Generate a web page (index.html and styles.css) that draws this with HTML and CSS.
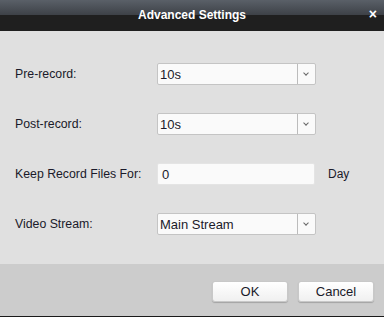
FILE: index.html
```html
<!DOCTYPE html>
<html lang="en">

<head>
    <meta charset="utf-8">
    <title>Advanced Settings</title>
    <link rel="stylesheet" href="styles.css">
</head>

<body>
    <div class="dialog">
        <div class="titlebar">
            <h1>Advanced Settings</h1>
            <span class="close">&#215;</span>
        </div>

        <div class="content">
            <div class="row">
                <label>Pre-record:</label>
                <div class="select"><span>10s</span><i class="arrow"></i></div>
            </div>
            <div class="row">
                <label>Post-record:</label>
                <div class="select"><span>10s</span><i class="arrow"></i></div>
            </div>
            <div class="row">
                <label>Keep Record Files For:</label>
                <div class="input">0</div>
                <span class="unit">Day</span>
            </div>
            <div class="row">
                <label>Video Stream:</label>
                <div class="select"><span>Main Stream</span><i class="arrow"></i></div>
            </div>
        </div>

        <div class="footer">
            <button>OK</button>
            <button>Cancel</button>
        </div>
    </div>
</body>

</html>
```

FILE: styles.css
```css
* {
    margin: 0;
    box-sizing: border-box;
}

body {
    background: #e0e0e0;
    font-family: 'Liberation Sans', Arial, sans-serif;
    font-size: 12px;
    color: #1a1a2a;
}

.dialog {
    width: 384px;
    height: 317px;
    display: flex;
    flex-direction: column;
}

.titlebar {
    height: 31px;
    background: linear-gradient(#5a6068 0px, #3d4147 15px, #1f1f1f 15px, #1f1f1f 100%);
    display: flex;
    align-items: center;
    justify-content: center;
    position: relative;
}

.titlebar h1 {
    font-size: 12px;
    font-weight: bold;
    color: #fff;
    padding-bottom: 1px;
}

.close {
    position: absolute;
    right: 7px;
    top: 7px;
    color: #fff;
    font-weight: bold;
    font-size: 14px;
    line-height: 14px;
}

.content {
    flex: 1;
    padding: 32px 0 0 15px;
}

.row {
    display: flex;
    align-items: center;
    height: 22px;
    margin-bottom: 28px;
}

.row label {
    width: 142px;
    font-size: 12.3px;
}

.select,
.input {
    width: 159px;
    height: 22px;
    background: #fafafa;
    border: 1px solid #c4c4c4;
    border-radius: 2px;
    display: flex;
    align-items: center;
}

.input {
    width: 158px;
    border-color: #e4e4e4;
    padding-left: 4px;
    font-size: 13px;
}

.select span {
    flex: 1;
    padding-left: 2px;
    font-size: 13px;
}

.arrow {
    width: 18px;
    height: 20px;
    border-left: 1px solid #bcbcbc;
    position: relative;
}

.arrow::after {
    content: "";
    position: absolute;
    left: 6px;
    top: 7px;
    width: 3px;
    height: 3px;
    border-right: 1.5px solid #666;
    border-bottom: 1.5px solid #666;
    transform: rotate(45deg);
}

.unit {
    margin-left: 13px;
}

.footer {
    height: 53px;
    background: #cccccc;
    border-bottom: 1px solid #1a1a1a;
    display: flex;
    justify-content: flex-end;
    align-items: flex-start;
    gap: 10px;
    padding: 17px 10px 0 0;
}

.footer button {
    width: 76px;
    height: 21px;
    background: linear-gradient(#ffffff, #f0f0f0);
    border: 1px solid #c8c8c8;
    border-radius: 3px;
    box-shadow: 0 1px 1px rgba(0, 0, 0, 0.2);
    font-family: 'Liberation Sans', Arial, sans-serif;
    font-size: 13px;
    color: #1a1a2a;
}
```
